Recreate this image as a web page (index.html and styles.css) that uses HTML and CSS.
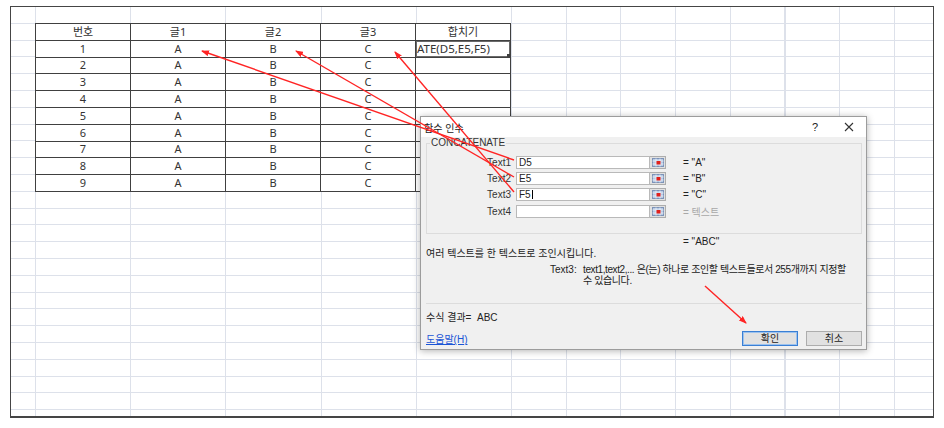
FILE: index.html
```html
<!DOCTYPE html>
<html lang="ko">
<head>
  <meta charset="UTF-8">
  <title>함수 인수</title>
  <link rel="stylesheet" href="styles.css">
</head>
<body>

<!-- 시트 -->
<div class="sheet">
  <table class="data">
    <tr><td>번호</td><td>글1</td><td>글2</td><td>글3</td><td>합치기</td></tr>
    <tr><td>1</td><td>A</td><td>B</td><td>C</td><td class="editing">ATE(D5,E5,F5)</td></tr>
    <tr><td>2</td><td>A</td><td>B</td><td>C</td><td></td></tr>
    <tr><td>3</td><td>A</td><td>B</td><td>C</td><td></td></tr>
    <tr><td>4</td><td>A</td><td>B</td><td>C</td><td></td></tr>
    <tr><td>5</td><td>A</td><td>B</td><td>C</td><td></td></tr>
    <tr><td>6</td><td>A</td><td>B</td><td>C</td><td></td></tr>
    <tr><td>7</td><td>A</td><td>B</td><td>C</td><td></td></tr>
    <tr><td>8</td><td>A</td><td>B</td><td>C</td><td></td></tr>
    <tr><td>9</td><td>A</td><td>B</td><td>C</td><td></td></tr>
  </table>

  <!-- 함수 인수 대화상자 -->
  <div class="dialog">
    <div class="dialog-title">
      <span class="title">함수 인수</span>
      <span class="title-btn">?</span>
      <span class="title-btn">
        <svg width="10" height="10" viewBox="0 0 10 10"><path d="M1 1L9 9M9 1L1 9" stroke="#333" stroke-width="1.1"/></svg>
      </span>
    </div>

    <div class="dialog-body">
      <fieldset class="args">
        <legend>CONCATENATE</legend>

        <div class="arg-row">
          <label>Text1</label>
          <div class="field">D5</div>
          <span class="ref-btn"><svg width="12" height="9" viewBox="0 0 12 9"><rect x="0.5" y="0.5" width="11" height="8" fill="#b9cbe4" stroke="#7d93b8"/><path d="M0.5 3H11.5M0.5 6H11.5M4 0.5V8.5M8 0.5V8.5" stroke="#eef3fa" stroke-width="0.8"/><rect x="4.5" y="3" width="4" height="3.5" fill="#e0201c"/></svg></span>
          <span class="arg-value">= "A"</span>
        </div>

        <div class="arg-row">
          <label>Text2</label>
          <div class="field">E5</div>
          <span class="ref-btn"><svg width="12" height="9" viewBox="0 0 12 9"><rect x="0.5" y="0.5" width="11" height="8" fill="#b9cbe4" stroke="#7d93b8"/><path d="M0.5 3H11.5M0.5 6H11.5M4 0.5V8.5M8 0.5V8.5" stroke="#eef3fa" stroke-width="0.8"/><rect x="4.5" y="3" width="4" height="3.5" fill="#e0201c"/></svg></span>
          <span class="arg-value">= "B"</span>
        </div>

        <div class="arg-row">
          <label>Text3</label>
          <div class="field">F5<span class="caret"></span></div>
          <span class="ref-btn"><svg width="12" height="9" viewBox="0 0 12 9"><rect x="0.5" y="0.5" width="11" height="8" fill="#b9cbe4" stroke="#7d93b8"/><path d="M0.5 3H11.5M0.5 6H11.5M4 0.5V8.5M8 0.5V8.5" stroke="#eef3fa" stroke-width="0.8"/><rect x="4.5" y="3" width="4" height="3.5" fill="#e0201c"/></svg></span>
          <span class="arg-value">= "C"</span>
        </div>

        <div class="arg-row">
          <label>Text4</label>
          <div class="field"></div>
          <span class="ref-btn"><svg width="12" height="9" viewBox="0 0 12 9"><rect x="0.5" y="0.5" width="11" height="8" fill="#b9cbe4" stroke="#7d93b8"/><path d="M0.5 3H11.5M0.5 6H11.5M4 0.5V8.5M8 0.5V8.5" stroke="#eef3fa" stroke-width="0.8"/><rect x="4.5" y="3" width="4" height="3.5" fill="#e0201c"/></svg></span>
          <span class="arg-value muted">= 텍스트</span>
        </div>
      </fieldset>

      <div class="result-line">= "ABC"</div>
      <p class="desc">여러 텍스트를 한 텍스트로 조인시킵니다.</p>
      <div class="arg-help">
        <span class="arg-help-name">Text3:</span>
        <span class="arg-help-text">text1,text2,... 은(는) 하나로 조인할 텍스트들로서 255개까지 지정할<br>수 있습니다.</span>
      </div>

      <div class="separator"></div>

      <div class="formula-result">수식 결과= &nbsp;ABC</div>

      <div class="dialog-foot">
        <a class="help-link" href="#">도움말(H)</a>
        <div class="buttons">
          <button class="btn default">확인</button>
          <button class="btn">취소</button>
        </div>
      </div>
    </div>
  </div>
</div>

<!-- 빨간 화살표 -->
<svg class="arrows" width="944" height="428" viewBox="0 0 944 428">
  <defs>
    <marker id="head" markerWidth="8" markerHeight="6" refX="7" refY="3" orient="auto" markerUnits="userSpaceOnUse">
      <path d="M0 0L8 3L0 6Z" fill="#ff2424"/>
    </marker>
  </defs>
  <line x1="514" y1="160" x2="202" y2="51" marker-end="url(#head)"/>
  <line x1="514" y1="177" x2="296" y2="51" marker-end="url(#head)"/>
  <line x1="514" y1="192" x2="395" y2="52" marker-end="url(#head)"/>
  <line x1="705" y1="286" x2="746" y2="323" marker-end="url(#head)"/>
</svg>

</body>
</html>
```

FILE: styles.css
```css
body {
  margin: 0;
  background: #fff;
  font-family: "Noto Sans", "Noto Sans CJK KR", sans-serif;
  color: #333;
}

/* 시트 */
.sheet {
  position: relative;
  width: 922px;
  height: 409px;
  margin: 6px 0 0 10px;
  border: 1px solid #454545;
  border-bottom-width: 2px;
  overflow: hidden;
  background-color: #fff;
  background-image:
    repeating-linear-gradient(to right, #dde1ea 0 1px, transparent 1px 95.2px),
    repeating-linear-gradient(to right, #dde1ea 0 1px, transparent 1px 54.7px),
    repeating-linear-gradient(to bottom, transparent 0 15.8px, #dde1ea 15.8px 16.8px);
  background-size: 476px 100%, 430px 100%, 100% 100%;
  background-position: 23.5px 0, 499.5px 0, 0 0;
  background-repeat: no-repeat;
}

.data {
  border-collapse: collapse;
  table-layout: fixed;
  width: 476px;
  margin: 16px 0 0 24px;
  font-size: 11px;
  background: #fff;
}

.data tr {
  height: 16.8px;
}

.data td {
  border: 1px solid #404040;
  padding: 0;
  text-align: center;
  vertical-align: middle;
  line-height: 14px;
  white-space: nowrap;
  overflow: hidden;
}

.data td.editing {
  position: relative;
  text-align: left;
  padding-left: 1px;
  font-size: 11.5px;
  box-shadow: inset 0 0 0 1px #6a6a6a;
}

.data td.editing::after {
  content: '';
  position: absolute;
  right: 0;
  bottom: 0;
  width: 3px;
  height: 3px;
  background: #404040;
}

/* 대화상자 */
.dialog {
  position: absolute;
  left: 409px;
  top: 109px;
  width: 447px;
  box-sizing: border-box;
  background: #f0f0f0;
  border: 1px solid #9c9c9c;
  box-shadow: 0 1px 7px rgba(0, 0, 0, 0.3);
  font-family: "Liberation Sans", "Noto Sans CJK KR", sans-serif;
  font-size: 10px;
  color: #222;
}

.dialog-title {
  display: flex;
  align-items: center;
  height: 20px;
  background: #fff;
}

.title {
  flex: 1;
  padding-left: 3px;
}

.title-btn {
  width: 34px;
  text-align: center;
  font-size: 11px;
  display: flex;
  justify-content: center;
}

.dialog-body {
  padding: 0 4px 3px 5px;
}

.args {
  margin: 0;
  padding: 5px 0 14px 0;
  border: 1px solid #dcdcdc;
}

.args legend {
  margin-left: 3px;
  padding: 0 1px;
  line-height: 12px;
  color: #333;
}

.arg-row {
  display: flex;
  align-items: center;
  height: 16.3px;
}

.arg-row label {
  width: 84px;
  padding-right: 5px;
  text-align: right;
  color: #333;
}

.field {
  width: 134px;
  height: 13px;
  box-sizing: border-box;
  border: 1px solid #b9b9b9;
  background: #fff;
  padding-left: 2px;
  line-height: 11px;
  display: flex;
  align-items: center;
}

.caret {
  display: inline-block;
  width: 1px;
  height: 9px;
  margin-left: 1px;
  background: #000;
}

.ref-btn {
  width: 16px;
  height: 13px;
  box-sizing: border-box;
  border: 1px solid #adadad;
  border-left: none;
  background: #e1e1e1;
  display: flex;
  align-items: center;
  justify-content: center;
}

.arg-value {
  margin-left: 17px;
}

.arg-value.muted {
  color: #a8a8a8;
}

.result-line {
  margin-top: 2px;
  padding-left: 257px;
  line-height: 12px;
}

.desc {
  margin: 0;
  line-height: 12px;
}

.arg-help {
  display: flex;
  margin-top: 4px;
  padding-left: 124px;
  line-height: 11px;
}

.arg-help-name {
  width: 33px;
  flex: none;
}

.arg-help-text {
  white-space: nowrap;
  letter-spacing: -0.4px;
}

.separator {
  margin-top: 17px;
  border-top: 1px solid #dcdcdc;
}

.formula-result {
  margin-top: 8px;
  line-height: 12px;
}

.dialog-foot {
  display: flex;
  align-items: center;
  justify-content: space-between;
  margin-top: 7px;
}

.help-link {
  color: #1a55d6;
  text-decoration: underline;
}

.buttons {
  display: flex;
  gap: 8px;
}

.btn {
  width: 56px;
  height: 15px;
  padding: 0;
  border: 1px solid #adadad;
  background: #e1e1e1;
  font-family: inherit;
  font-size: 10px;
  line-height: 12px;
  color: #222;
}

.btn.default {
  border-color: #3a7fd4;
  box-shadow: inset 0 0 0 1px #9cc2ee;
}

/* 화살표 */
.arrows {
  position: absolute;
  top: 0;
  left: 0;
  pointer-events: none;
}

.arrows line {
  stroke: #ff2424;
  stroke-width: 1.4;
}
```
